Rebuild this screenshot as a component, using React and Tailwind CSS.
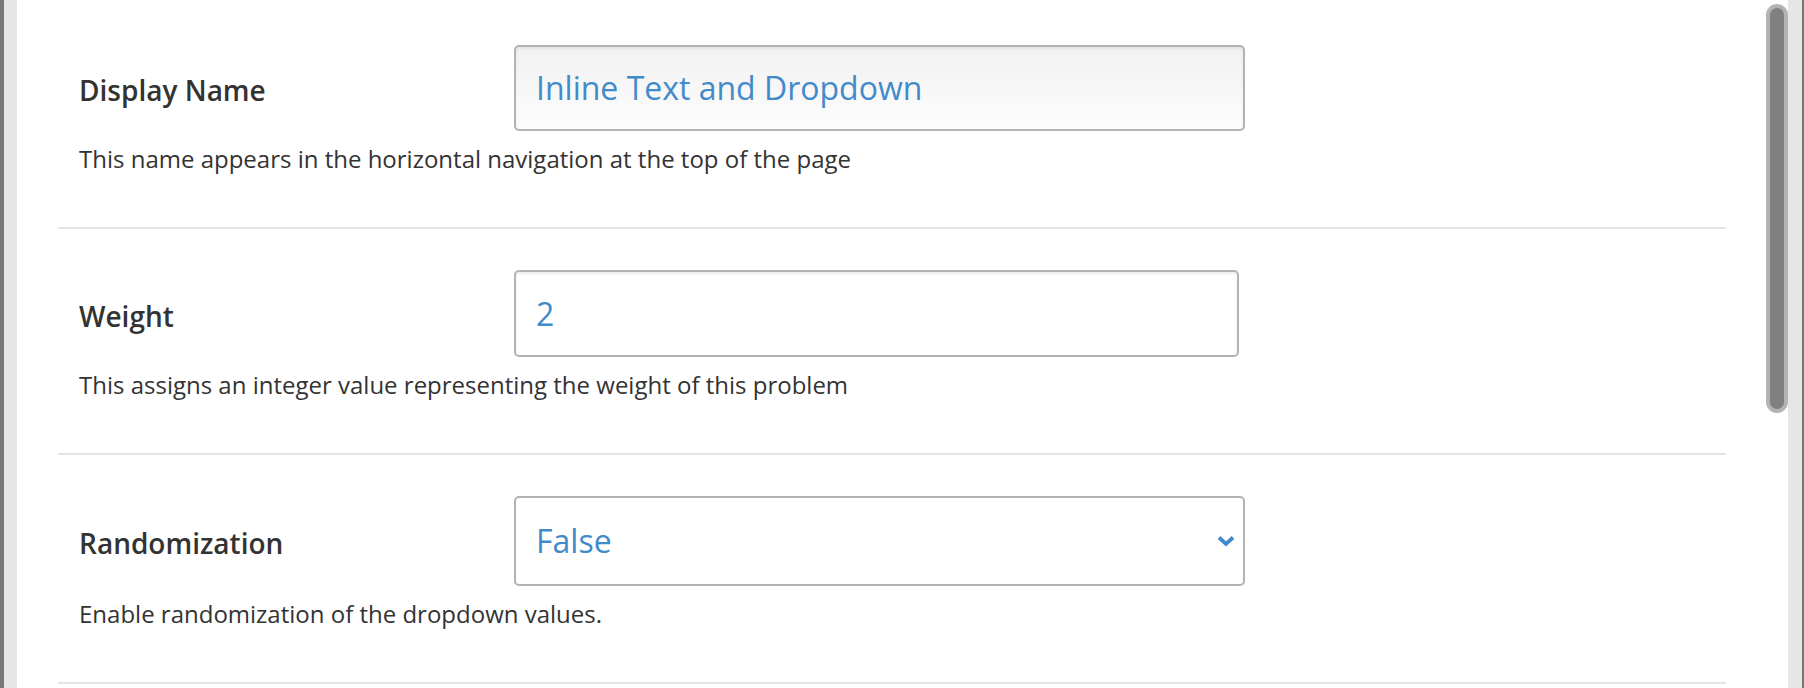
import React from 'react';

const fields = [
  {
    label: 'Display Name',
    value: 'Inline Text and Dropdown',
    help: 'This name appears in the horizontal navigation at the top of the page',
    kind: 'readonly',
  },
  {
    label: 'Weight',
    value: '2',
    help: 'This assigns an integer value representing the weight of this problem',
    kind: 'text',
  },
  {
    label: 'Randomization',
    value: 'False',
    help: 'Enable randomization of the dropdown values.',
    kind: 'select',
  },
];

const Chevron = () => (
  <svg width="18" height="12" viewBox="0 0 18 12" className="shrink-0">
    <path d="M2 2.5 L9 9 L16 2.5" fill="none" stroke="#428bca" strokeWidth="3.8" />
  </svg>
);

const Control = ({ field }) => {
  if (field.kind === 'select') {
    return (
      <div className="w-[731px] h-[90px] flex items-center justify-between pl-[20px] pr-[8px] rounded-[5px] border-2 border-[#b3b3b3] bg-white">
        <span className="text-[32px] text-[#428bca]">{field.value}</span>
        <Chevron />
      </div>
    );
  }
  if (field.kind === 'readonly') {
    return (
      <div className="w-[731px] h-[86px] flex items-center pl-[20px] rounded-[5px] border-2 border-[#b3b3b3] bg-gradient-to-b from-[#f1f1f1] to-[#fdfdfd] shadow-[inset_0_2px_3px_rgba(0,0,0,0.06)]">
        <span className="text-[32px] text-[#428bca]">{field.value}</span>
      </div>
    );
  }
  return (
    <div className="w-[725px] h-[87px] flex items-center pl-[20px] rounded-[5px] border-2 border-[#b3b3b3] bg-white shadow-[inset_0_2px_3px_rgba(0,0,0,0.07)]">
      <span className="text-[32px] text-[#428bca]">{field.value}</span>
    </div>
  );
};

export default function App() {
  return (
    <div className="flex w-[1804px] h-[688px] overflow-hidden bg-white font-['Open_Sans',sans-serif]">
      <div className="w-[4px] bg-[#777777]" />
      <div className="w-[13px] bg-[#e6e6e6]" />

      {/* settings list */}
      <main className="flex-1 pl-[41px] pr-[40px] pt-[4px]">
        {fields.map(field => (
          <section key={field.label} className="pt-[41px] pb-[52px] border-b-2 border-[#e4e4e4]">
            <div className="flex items-center">
              <label className="w-[456px] pl-[21px] pt-[4px] text-[28px] font-semibold text-[#333333]">{field.label}</label>
              <Control field={field} />
            </div>
            <p className="mt-[12px] pl-[21px] text-[24px] leading-[32px] text-[#333333]">{field.help}</p>
          </section>
        ))}
      </main>

      {/* scrollbar */}
      <div className="w-[22px] pt-[4px]">
        <div className="h-[409px] rounded-full border-4 border-[#b3b3b3] bg-[#808080]" />
      </div>
      <div className="w-[14px] bg-[#e6e6e6]" />
      <div className="w-[2px] bg-[#777777]" />
    </div>
  );
}
